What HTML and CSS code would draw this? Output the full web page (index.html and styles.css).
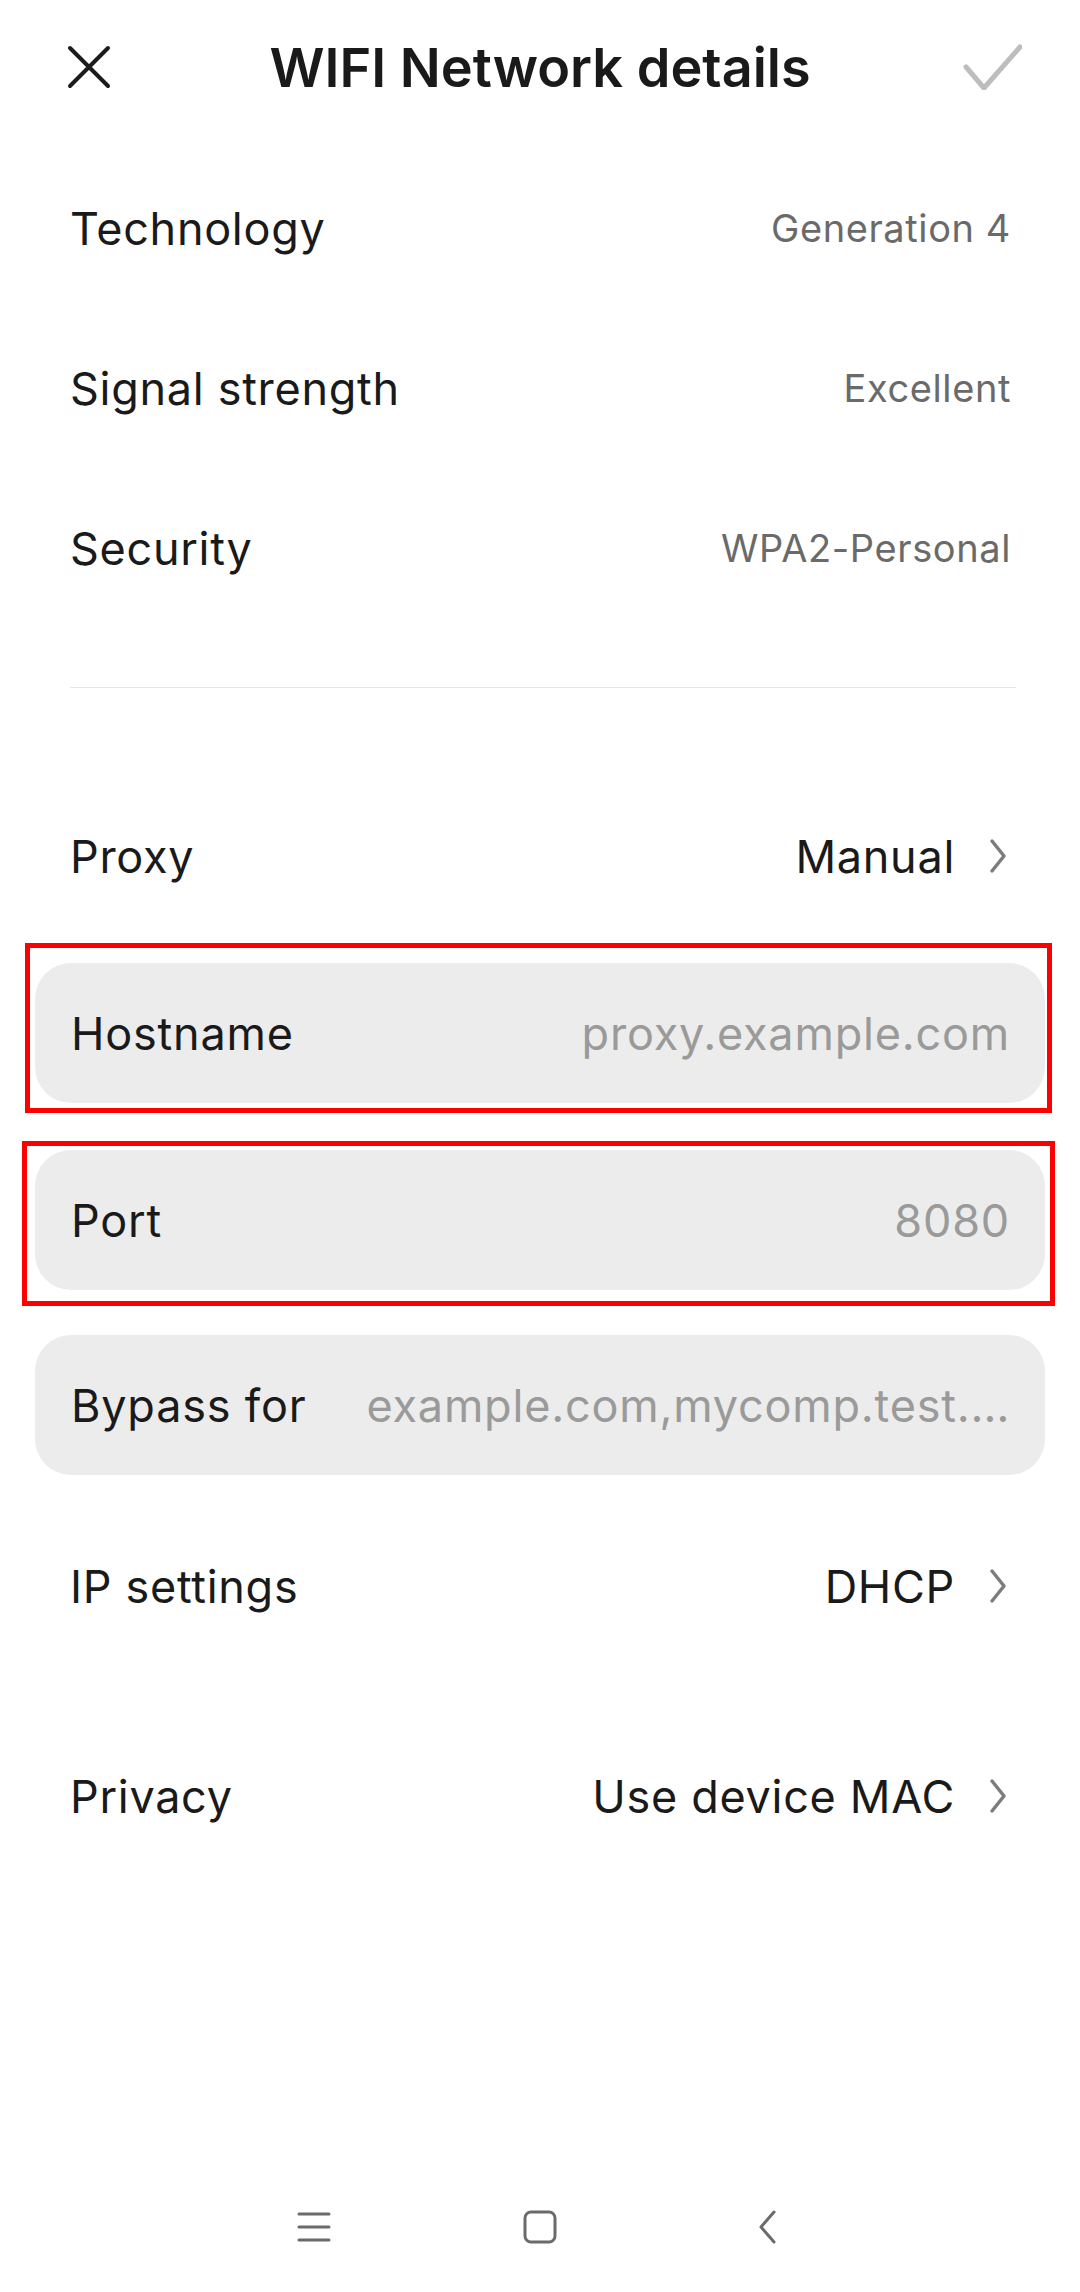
FILE: index.html
```html
<!DOCTYPE html>
<html lang="en">
<head>
  <meta charset="UTF-8" />
  <title>WIFI Network details</title>
  <meta name="viewport" content="width=device-width, initial-scale=1.0" />
  <link rel="stylesheet" href="styles.css">
</head>
<body>

<!-- Header -->
<div class="header">
  <svg class="close" width="44" height="44" viewBox="0 0 44 44">
    <path d="M3 3 L41 41 M41 3 L3 41" />
  </svg>
  <h1>WIFI Network details</h1>
  <svg class="check" width="60" height="46" viewBox="0 0 60 46">
    <path d="M4 23 L22 44 L58 3" />
  </svg>
</div>

<!-- Network info -->
<div class="info-list">
  <div class="row"><span class="label">Technology</span><span class="info">Generation 4</span></div>
  <div class="row"><span class="label">Signal strength</span><span class="info">Excellent</span></div>
  <div class="row"><span class="label">Security</span><span class="info">WPA2-Personal</span></div>
</div>

<div class="divider"></div>

<div class="row link proxy-row">
  <span class="label">Proxy</span>
  <span class="value">Manual</span>
  <svg class="chevron" width="20" height="36" viewBox="0 0 20 36"><polyline points="4,3 16,18 4,33" /></svg>
</div>

<div class="mark mark-host">
  <div class="card"><span class="label">Hostname</span><span class="hint">proxy.example.com</span></div>
</div>

<div class="mark mark-port">
  <div class="card"><span class="label">Port</span><span class="hint">8080</span></div>
</div>

<div class="card bypass"><span class="label">Bypass for</span><span class="hint">example.com,mycomp.test.…</span></div>

<div class="row link ip-row">
  <span class="label">IP settings</span>
  <span class="value">DHCP</span>
  <svg class="chevron" width="20" height="36" viewBox="0 0 20 36"><polyline points="4,3 16,18 4,33" /></svg>
</div>

<div class="row link privacy-row">
  <span class="label">Privacy</span>
  <span class="value">Use device MAC</span>
  <svg class="chevron" width="20" height="36" viewBox="0 0 20 36"><polyline points="4,3 16,18 4,33" /></svg>
</div>

<!-- System navigation -->
<div class="navbar">
  <svg class="nav-icon" width="60" height="40" viewBox="0 0 60 40">
    <path d="M15 7 H45 M15 20 H45 M15 33 H45" />
  </svg>
  <svg class="nav-icon" width="60" height="40" viewBox="0 0 60 40">
    <rect x="15" y="5" width="30" height="30" rx="6" />
  </svg>
  <svg class="nav-icon" width="60" height="40" viewBox="0 0 60 40">
    <polyline points="38,5 25,20 38,35" />
  </svg>
</div>

</body>
</html>
```

FILE: styles.css
```css
body {
  margin: 0; width: 1080px; height: 2292px;
  display: flex; flex-direction: column;
  background: #fff; color: #1a1a1a;
  font-family: Inter, "Noto Sans", sans-serif;
}

.header {
  height: 134px; padding: 0 58px;
  display: grid; grid-template-columns: 1fr auto 1fr; align-items: center;
}
.header h1 { margin: 0; font-size: 54px; font-weight: 600; }
.close { justify-self: start; margin-left: 9px; }
.close path { stroke: #1c1c1c; stroke-width: 4; stroke-linecap: round; fill: none; }
.check { justify-self: end; }
.check path { stroke: #bdbdbd; stroke-width: 5; stroke-linecap: round; stroke-linejoin: round; fill: none; }

.info-list { margin-top: 14px; }
.row {
  height: 160px; padding: 0 69px 0 70px;
  display: flex; align-items: center;
  font-size: 45px; letter-spacing: 0.7px;
}
.row .label { flex: 1; }
.info { font-size: 38px; letter-spacing: 0.6px; color: #6a6a6a; }

.divider { height: 1px; background: #e4e4e4; margin: 59px 64px 0 70px; }

.link { padding-right: 72px; }
.value { color: #1a1a1a; }
.chevron { margin-left: 33px; }
.chevron polyline { stroke: #7d7d7d; stroke-width: 3.5; stroke-linecap: round; stroke-linejoin: round; fill: none; }

.proxy-row { margin-top: 88px; }
.ip-row { margin-top: 31px; }
.privacy-row { margin-top: 50px; }

/* red annotation frames */
.mark { border: 5px solid #ff0000; }
.mark .card { margin: 0; }
.mark-host { margin: 7px 28px 0 25px; padding: 15px 2px 5px 5px; }
.mark-port { margin: 28px 25px 0 22px; padding: 4px 5px 11px 8px; }

.card {
  height: 140px; margin: 0 35px; padding: 0 35px 0 36px;
  background: #ececec; border-radius: 36px;
  display: flex; align-items: center;
  font-size: 45px; letter-spacing: 0.8px;
}
.card .label { flex: none; }
.hint {
  flex: 1; margin-left: 60px; text-align: right; color: #9a9a9a;
  white-space: nowrap; overflow: hidden; text-overflow: ellipsis;
}
.bypass { margin-top: 29px; }

.navbar {
  margin-top: auto; height: 130px;
  display: flex; justify-content: center; align-items: center; gap: 166px;
}
.nav-icon path, .nav-icon rect, .nav-icon polyline {
  stroke: #6b6b6b; stroke-width: 3; stroke-linecap: round; stroke-linejoin: round; fill: none;
}
```
